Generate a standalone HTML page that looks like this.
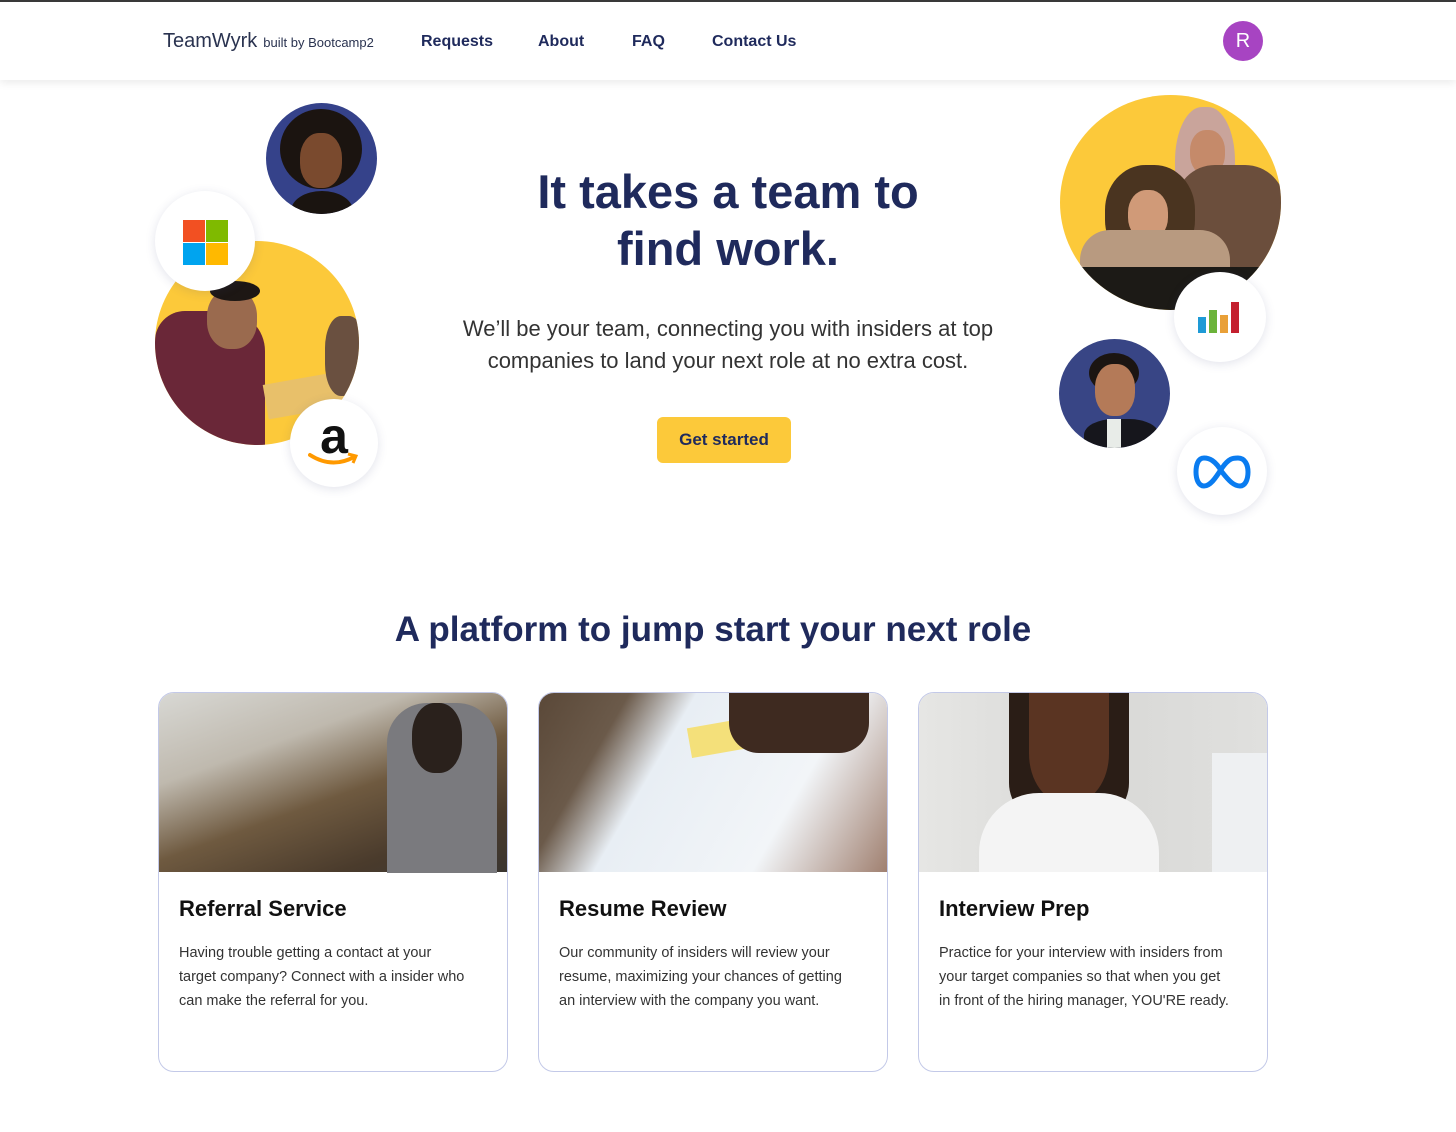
<!DOCTYPE html>
<html><head><meta charset="utf-8"><style>
*{box-sizing:border-box;margin:0;padding:0}
body{width:1456px;height:1132px;background:#fff;font-family:"Liberation Sans",sans-serif;position:relative;overflow:hidden;color:#222}
.top{position:absolute;left:0;top:0;width:1456px;height:2px;background:#3a3a3a}
nav{position:absolute;left:0;top:2px;width:1456px;height:78px;background:#fff;box-shadow:0 3px 8px rgba(0,0,0,.08);z-index:5}
.brand{position:absolute;left:163px;top:28px;font-size:20px;color:#2a3350}
.brand small{font-size:13px;margin-left:6px}
.nl{position:absolute;top:31px;font-size:16px;font-weight:bold;color:#1f2a5c}
.av{position:absolute;left:1223px;top:19px;width:40px;height:40px;border-radius:50%;background:#a744c2;color:#fff;font-size:20px;text-align:center;line-height:40px}
.c{position:absolute;border-radius:50%;overflow:hidden}
.w{background:#fff;box-shadow:0 2px 10px rgba(60,70,120,.15)}
h1{position:absolute;left:428px;width:600px;top:163px;text-align:center;font-size:47px;line-height:57px;color:#1f2a5c;font-weight:bold}
.sub{position:absolute;left:428px;width:600px;top:313px;text-align:center;font-size:22px;line-height:32px;color:#333}
.btn{position:absolute;left:657px;top:417px;width:134px;height:46px;background:#fcc93a;border-radius:6px;text-align:center;line-height:46px;font-weight:bold;font-size:17px;color:#1f2a5c}
h2{position:absolute;left:0;width:1426px;top:610px;text-align:center;font-size:35px;color:#1f2a5c;font-weight:bold}
.card{position:absolute;top:692px;width:350px;height:380px;border:1px solid #c3c9e8;border-radius:16px;overflow:hidden}
.img{height:179px}
.card h3{position:absolute;left:20px;top:203px;font-size:22px;color:#111}
.card p{position:absolute;left:20px;top:248px;white-space:nowrap;font-size:14.5px;line-height:24px;color:#333}
</style></head><body>
<div class="top"></div>
<nav>
<div class="brand">TeamWyrk<small>built by Bootcamp2</small></div>
<div class="nl" style="left:421px">Requests</div>
<div class="nl" style="left:538px">About</div>
<div class="nl" style="left:632px">FAQ</div>
<div class="nl" style="left:712px">Contact Us</div>
<div class="av">R</div>
</nav>

<div class="c" style="left:266px;top:103px;width:111px;height:111px;background:#35428a">
 <div style="position:absolute;left:14px;top:6px;width:82px;height:80px;border-radius:50%;background:#1b1410"></div>
 <div style="position:absolute;left:34px;top:30px;width:42px;height:55px;border-radius:45%;background:#7a4a2e"></div>
 <div style="position:absolute;left:25px;top:88px;width:62px;height:40px;border-radius:50%;background:#1a1410"></div>
</div>
<div class="c" style="left:155px;top:241px;width:204px;height:204px;background:#fcc93a">
 <div style="position:absolute;left:0;top:70px;width:110px;height:140px;background:#6a2738;border-radius:30px 40px 0 0"></div>
 <div style="position:absolute;left:52px;top:48px;width:50px;height:60px;border-radius:45%;background:#9a6a4e"></div>
 <div style="position:absolute;left:55px;top:40px;width:50px;height:20px;border-radius:50%;background:#1d1714"></div>
 <div style="position:absolute;left:110px;top:135px;width:100px;height:35px;background:#e8c06a;transform:rotate(-10deg)"></div>
 <div style="position:absolute;left:170px;top:75px;width:40px;height:80px;border-radius:40%;background:#6a5040"></div>
</div>
<div class="c w" style="left:155px;top:191px;width:100px;height:100px">
 <div style="position:absolute;left:28px;top:29px;width:22px;height:22px;background:#f25022"></div>
 <div style="position:absolute;left:51px;top:29px;width:22px;height:22px;background:#7fba00"></div>
 <div style="position:absolute;left:28px;top:52px;width:22px;height:22px;background:#00a4ef"></div>
 <div style="position:absolute;left:51px;top:52px;width:22px;height:22px;background:#ffb900"></div>
</div>
<div class="c w" style="left:290px;top:399px;width:88px;height:88px">
 <div style="position:absolute;left:0;width:88px;top:8px;text-align:center;font-size:50px;font-weight:bold;color:#111">a</div>
 <svg style="position:absolute;left:18px;top:52px" width="52" height="18"><path d="M2 4 Q24 18 46 6" stroke="#f90" stroke-width="4" fill="none" stroke-linecap="round"/><path d="M40 3 L48 5 L45 12" stroke="#f90" stroke-width="3" fill="none"/></svg>
</div>

<div class="c" style="left:1060px;top:95px;width:221px;height:215px;background:#fcc93a">
 <div style="position:absolute;left:115px;top:12px;width:60px;height:120px;border-radius:45% 45% 10px 10px;background:#c9a49b"></div>
 <div style="position:absolute;left:130px;top:35px;width:35px;height:45px;border-radius:45%;background:#c58a6a"></div>
 <div style="position:absolute;left:115px;top:70px;width:110px;height:150px;background:#6b4e3c;border-radius:40px 40px 0 0"></div>
 <div style="position:absolute;left:45px;top:70px;width:90px;height:100px;border-radius:45%;background:#4a3420"></div>
 <div style="position:absolute;left:68px;top:95px;width:40px;height:50px;border-radius:45%;background:#d09a78"></div>
 <div style="position:absolute;left:20px;top:135px;width:150px;height:50px;background:#b89a80;border-radius:30px 30px 0 0"></div>
 <div style="position:absolute;left:20px;top:172px;width:180px;height:50px;background:#1c1a16"></div>
</div>
<div class="c w" style="left:1174px;top:272px;width:92px;height:90px">
 <div style="position:absolute;left:24px;top:45px;width:8px;height:16px;background:#1e9ad6"></div>
 <div style="position:absolute;left:35px;top:38px;width:8px;height:23px;background:#6bb33a"></div>
 <div style="position:absolute;left:46px;top:43px;width:8px;height:18px;background:#e9a038"></div>
 <div style="position:absolute;left:57px;top:30px;width:8px;height:31px;background:#c4202f"></div>
</div>
<div class="c" style="left:1059px;top:339px;width:111px;height:109px;background:#384585">
 <div style="position:absolute;left:30px;top:14px;width:50px;height:40px;border-radius:50%;background:#1b1512"></div>
 <div style="position:absolute;left:36px;top:25px;width:40px;height:52px;border-radius:45%;background:#b47a58"></div>
 <div style="position:absolute;left:25px;top:80px;width:75px;height:40px;border-radius:40% 40% 0 0;background:#16161c"></div>
 <div style="position:absolute;left:48px;top:80px;width:14px;height:30px;background:#e8ece8"></div>
</div>
<div class="c w" style="left:1177px;top:427px;width:90px;height:88px">
 <svg style="position:absolute;left:16px;top:28px" width="58" height="34" viewBox="0 0 58 34"><path d="M29 17 C22 5 16 3 11 3 C5 3 3 10 3 17 C3 25 6 31 11 31 C17 31 22 24 29 13 C36 3 40 3 45 3 C52 3 55 10 55 17 C55 25 52 31 47 31 C41 31 36 26 29 17Z" stroke="#0a7cf0" stroke-width="5" fill="none"/></svg>
</div>

<h1>It takes a team to<br>find work.</h1>
<div class="sub">We’ll be your team, connecting you with insiders at top companies to land your next role at no extra cost.</div>
<div class="btn">Get started</div>

<h2>A platform to jump start your next role</h2>

<div class="card" style="left:158px">
 <div class="img" style="background:linear-gradient(160deg,#d8d8d4 0%,#bfb9ae 30%,#6f5a40 55%,#4a3b2c 80%,#3a3530 100%);position:relative">
  <div style="position:absolute;right:10px;top:10px;width:110px;height:170px;background:#7a7a7e;border-radius:40px 40px 0 0"></div>
  <div style="position:absolute;right:45px;top:10px;width:50px;height:70px;border-radius:45%;background:#2a211c"></div>
 </div>
 <h3>Referral Service</h3>
 <p>Having trouble getting a contact at your<br>target company? Connect with a insider who<br>can make the referral for you.</p>
</div>
<div class="card" style="left:538px">
 <div class="img" style="background:linear-gradient(120deg,#5a4838 0%,#6b5a4a 20%,#e8eef4 35%,#f2f5f8 70%,#a08070 100%);position:relative">
  <div style="position:absolute;left:150px;top:30px;width:60px;height:30px;background:#f4e07a;transform:rotate(-10deg)"></div>
  <div style="position:absolute;left:190px;top:0;width:140px;height:60px;background:#3e2a20;border-radius:0 0 30px 30px"></div>
 </div>
 <h3>Resume Review</h3>
 <p>Our community of insiders will review your<br>resume, maximizing your chances of getting<br>an interview with the company you want.</p>
</div>
<div class="card" style="left:918px">
 <div class="img" style="background:linear-gradient(90deg,#e6e6e4,#d8d8d6 50%,#e0e0de);position:relative">
  <div style="position:absolute;left:90px;top:0;width:120px;height:130px;background:#2a1d16;border-radius:0 0 40px 40px"></div>
  <div style="position:absolute;left:110px;top:0;width:80px;height:110px;background:#5a3422;border-radius:0 0 45% 45%"></div>
  <div style="position:absolute;left:60px;top:100px;width:180px;height:79px;background:#f4f4f4;border-radius:60px 60px 0 0"></div>
  <div style="position:absolute;right:0;top:60px;width:55px;height:119px;background:#eef0f2"></div>
 </div>
 <h3>Interview Prep</h3>
 <p>Practice for your interview with insiders from<br>your target companies so that when you get<br>in front of the hiring manager, YOU'RE ready.</p>
</div>
</body></html>
